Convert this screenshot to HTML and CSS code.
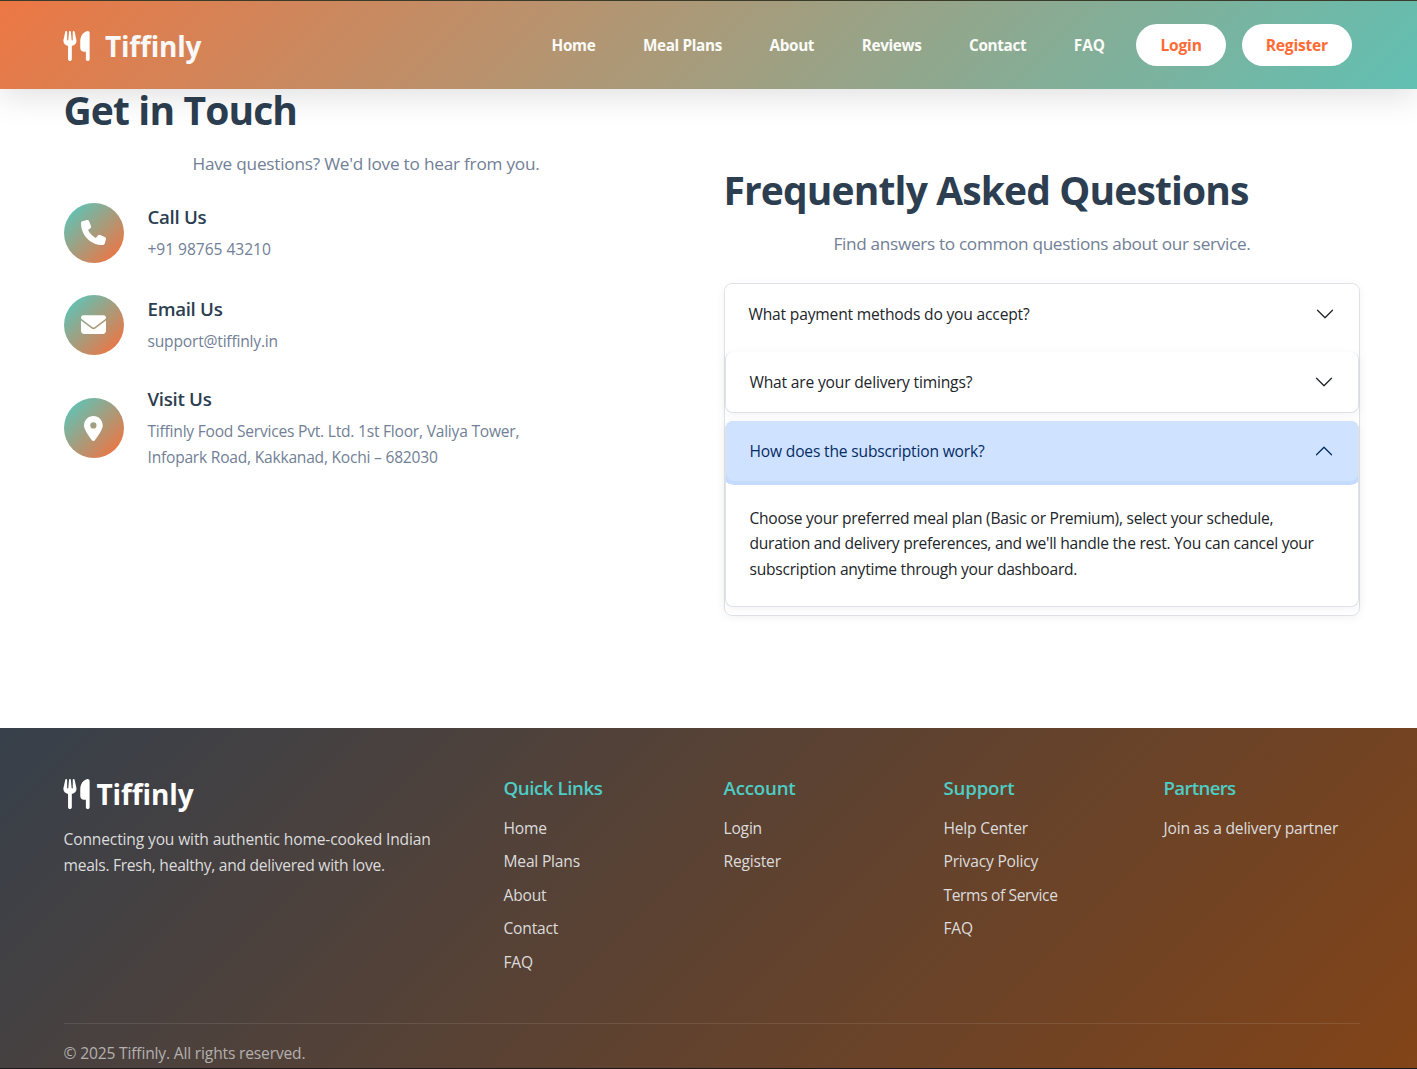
FILE: index.html
```html
<!DOCTYPE html>
<html lang="en">
<head>
<meta charset="utf-8">
<title>Tiffinly</title>
<link rel="stylesheet" href="styles.css">
</head>
<body>
<svg class="sprite" aria-hidden="true">
  <symbol id="utensils" viewBox="0 0 448 512"><path d="M416 0C400 0 288 32 288 176V288c0 35.3 28.7 64 64 64h32V480c0 17.7 14.3 32 32 32s32-14.3 32-32V352 240 32c0-17.7-14.3-32-32-32zM64 16C64 7.8 57.9 1 49.7 .1S34.2 4.6 32.4 12.5L2.1 148.8C.7 155.1 0 161.5 0 167.9c0 45.9 35.1 83.6 80 87.7V480c0 17.7 14.3 32 32 32s32-14.3 32-32V255.6c44.9-4.1 80-41.8 80-87.7c0-6.4-.7-12.8-2.1-19.1L191.6 12.5c-1.8-8-9.3-13.3-17.4-12.4S160 7.8 160 16V150.2c0 5.4-4.4 9.8-9.8 9.8c-5.1 0-9.3-3.9-9.8-9L127.9 14.6C127.2 6.3 120.3 0 112 0s-15.2 6.3-15.9 14.6L83.7 151c-.5 5.1-4.7 9-9.8 9c-5.4 0-9.8-4.4-9.8-9.8V16z"/></symbol>
  <symbol id="chevron" viewBox="0 0 16 16"><path d="M1.646 4.646a.5.5 0 0 1 .708 0L8 10.293l5.646-5.647a.5.5 0 0 1 .708.708l-6 6a.5.5 0 0 1-.708 0l-6-6a.5.5 0 0 1 0-.708z"/></symbol>
</svg>
<header class="header">
  <a class="brand"><svg class="brand-icon"><use href="#utensils"/></svg><span>Tiffinly</span></a>
  <nav class="nav">
    <a class="nav-link">Home</a><a class="nav-link">Meal Plans</a><a class="nav-link">About</a><a class="nav-link">Reviews</a><a class="nav-link">Contact</a><a class="nav-link nav-last">FAQ</a>
    <a class="pill">Login</a><a class="pill">Register</a>
  </nav>
</header>
<main class="main">
  <section class="contact">
    <h2 class="title">Get in Touch</h2>
    <p class="subtitle">Have questions? We'd love to hear from you.</p>
    <div class="contact-list">
      <div class="contact-item">
        <div class="bubble"><svg class="icon" viewBox="0 0 512 512"><path d="M164.9 24.6c-7.7-18.6-28-28.5-47.4-23.2l-88 24C12.1 30.2 0 46 0 64C0 311.4 200.6 512 448 512c18 0 33.8-12.1 38.6-29.5l24-88c5.3-19.4-4.6-39.7-23.2-47.4l-96-40c-16.3-6.8-35.2-2.1-46.3 11.6L304.7 368C234.3 334.7 177.3 277.7 144 207.3L193.3 167c13.7-11.2 18.4-30 11.6-46.3l-40-96z"/></svg></div>
        <div><h5 class="label">Call Us</h5><p class="detail loose">+91 98765 43210</p></div>
      </div>
      <div class="contact-item">
        <div class="bubble"><svg class="icon" viewBox="0 0 512 512"><path d="M48 64C21.5 64 0 85.5 0 112c0 15.1 7.1 29.3 19.2 38.4L236.8 313.6c11.4 8.5 27 8.5 38.4 0L492.8 150.4c12.1-9.1 19.2-23.3 19.2-38.4c0-26.5-21.5-48-48-48H48zM0 176V384c0 35.3 28.7 64 64 64H448c35.3 0 64-28.7 64-64V176L294.4 339.2c-22.8 17.1-54 17.1-76.8 0L0 176z"/></svg></div>
        <div><h5 class="label">Email Us</h5><p class="detail">support@tiffinly.in</p></div>
      </div>
      <div class="contact-item">
        <div class="bubble"><svg class="icon" viewBox="0 0 384 512"><path d="M215.7 499.2C267 435 384 279.4 384 192C384 86 298 0 192 0S0 86 0 192c0 87.4 117 243 168.3 307.2c12.3 15.3 35.1 15.3 47.4 0zM192 128a64 64 0 1 1 0 128 64 64 0 1 1 0-128z"/></svg></div>
        <div><h5 class="label">Visit Us</h5><p class="detail address">Tiffinly Food Services Pvt. Ltd. 1st Floor, Valiya Tower,<br>Infopark Road, Kakkanad, Kochi – 682030</p></div>
      </div>
    </div>
  </section>
  <section class="faq">
    <h2 class="title">Frequently Asked Questions</h2>
    <p class="subtitle subtitle-snug">Find answers to common questions about our service.</p>
    <div class="accordion">
      <div class="item item-first"><button class="question"><span>What payment methods do you accept?</span><svg class="chevron"><use href="#chevron"/></svg></button></div>
      <div class="item"><button class="question"><span>What are your delivery timings?</span><svg class="chevron"><use href="#chevron"/></svg></button></div>
      <div class="item"><button class="question open"><span>How does the subscription work?</span><svg class="chevron"><use href="#chevron"/></svg></button>
        <div class="answer">Choose your preferred meal plan (Basic or Premium), select your schedule,<br>duration and delivery preferences, and we'll handle the rest. You can cancel your<br>subscription anytime through your dashboard.</div>
      </div>
    </div>
  </section>
</main>
<footer class="footer">
  <div class="footer-grid">
    <div>
      <div class="footer-brand"><svg class="brand-icon"><use href="#utensils"/></svg><span>Tiffinly</span></div>
      <p class="about"><span class="wide">Connecting you with authentic home-cooked Indian</span><br><span class="snug">meals. Fresh, healthy, and delivered with love.</span></p>
    </div>
    <div><h5 class="heading heading-snug">Quick Links</h5><ul class="links"><li>Home</li><li>Meal Plans</li><li>About</li><li>Contact</li><li>FAQ</li></ul></div>
    <div><h5 class="heading">Account</h5><ul class="links"><li>Login</li><li>Register</li></ul></div>
    <div><h5 class="heading">Support</h5><ul class="links"><li>Help Center</li><li>Privacy Policy</li><li class="tight">Terms of Service</li><li>FAQ</li></ul></div>
    <div><h5 class="heading heading-tight">Partners</h5><ul class="links"><li>Join as a delivery partner</li></ul></div>
  </div>
  <div class="copyright">© 2025 Tiffinly. All rights reserved.</div>
</footer>
</body>
</html>
```
FILE: styles.css
```css
* { box-sizing: border-box; }
body {
  margin: 0;
  height: 1069px;
  overflow: hidden;
  background: #fff;
  font-family: "Open Sans", "Noto Sans", sans-serif;
  font-size: 15.6px;
  line-height: 25.6px;
  letter-spacing: -.2px;
  color: #212529;
  font-variant-ligatures: none;
}
h2, h5, p, ul { margin: 0; padding: 0; }
.sprite { display: none; }
.loose { letter-spacing: -.05px; }
.wide { letter-spacing: -.15px; }
.snug { letter-spacing: -.27px; }
.tight { letter-spacing: -.37px; }

/* Header */
.header {
  position: relative;
  z-index: 1;
  display: flex;
  justify-content: space-between;
  align-items: center;
  height: 89px;
  padding: 0 65px 0 63px;
  background: linear-gradient(135deg, #ec7744, #61c0b3);
  box-shadow: 0 8px 32px rgba(0, 0, 0, .12);
  border-top: 1px solid #3b3b29;
}
.brand {
  display: flex;
  align-items: center;
  gap: 15px;
  padding-top: 2px;
  font-size: 28px;
  font-weight: 700;
  color: #f8f8f8;
}
.brand span { padding-top: 2px; }
.brand-icon { width: 27px; height: 30px; fill: #fff; }
.nav {
  display: flex;
  align-items: center;
  gap: 47.6px;
  font-weight: 700;
  color: #fbfbf8;
}
.nav-link {
  padding-top: 1px;
  font-size: 15.3px;
  letter-spacing: -.36px;
}
.nav-last { margin-right: -16.1px; letter-spacing: 0; }
.pill {
  height: 42px;
  margin-bottom: 1px;
  padding: 9px 24px 7px;
  border-radius: 21px;
  background: #fff;
  color: #ff6b35;
}
.pill + .pill { margin-left: -31.6px; }

/* Contact and FAQ */
.main {
  display: grid;
  grid-template-columns: 604px 636px;
  column-gap: 56px;
  height: 639px;
  padding: 0 57px 0 64px;
}
.faq { padding-top: 80px; }
.title {
  margin-left: -.5px;
  font-size: 39px;
  line-height: 42px;
  font-weight: 700;
  letter-spacing: -.87px;
  color: #2c3e50;
}
.subtitle {
  margin: 18.6px 0 25.4px;
  font-size: 17.2px;
  line-height: 28px;
  text-align: center;
  letter-spacing: -.22px;
  color: #718096;
}
.subtitle-snug { letter-spacing: -.32px; }
.contact-list { display: grid; gap: 32px; }
.contact-item { display: flex; align-items: center; gap: 23.5px; }
.bubble {
  display: flex;
  align-items: center;
  justify-content: center;
  width: 60px;
  height: 60px;
  padding-right: 1px;
  border-radius: 50%;
  background: linear-gradient(135deg, #4ecdc4, #ff6b35);
}
.icon { height: 25px; fill: #fff; }
.label {
  margin: .3px 0 8.8px;
  font-size: 18.7px;
  line-height: 23px;
  font-weight: 600;
  letter-spacing: -.3px;
  color: #2c3e50;
}
.detail { margin-bottom: -1.1px; color: #718096; }
.address { letter-spacing: -.23px; }

.accordion {
  padding-bottom: 8px;
  border: 1px solid #dee2e6;
  border-radius: 8px;
  box-shadow: 0 2px 10px rgba(0, 0, 0, .05);
}
.item {
  overflow: hidden;
  border: 1px solid #dee2e6;
  border-top: 0;
  border-radius: 8px;
  box-shadow: 0 2px 10px rgba(0, 0, 0, .05);
  background: #fff;
}
.item + .item { margin-top: 8px; }
.item-first { border: 0; box-shadow: none; }
.question {
  display: flex;
  align-items: center;
  justify-content: space-between;
  width: 100%;
  height: 60px;
  padding: 0 24px 0 23.5px;
  border: 0;
  border-radius: 8px;
  background: #fff;
  font: inherit;
  letter-spacing: -.18px;
  color: #212529;
}
.question span { padding-top: 1.2px; }
.chevron { width: 20px; height: 20px; fill: #212529; }
.question.open { background: #cfe2ff; color: #052c65; box-shadow: 0 0 0 4px #c2dbfe; }
.open .chevron { fill: #052c65; transform: rotate(180deg); }
.answer { padding: 24.7px 23.5px 23.3px; letter-spacing: -.26px; }

/* Footer */
.footer {
  height: 341px;
  padding: 48px 57px 0 63.5px;
  border-bottom: 1px solid #1d1a1c;
  background: linear-gradient(135deg, #37404b, #824418);
  color: #dcdcdc;
}
.footer-grid {
  display: grid;
  grid-template-columns: 440px 220px 220px 220px 196px;
  height: 247px;
}
.footer-brand {
  display: flex;
  align-items: center;
  gap: 7px;
  height: 36px;
  margin: 0 0 15px -1px;
  font-size: 28px;
  font-weight: 700;
  letter-spacing: -.1px;
  color: #fff;
}
.footer-brand span { padding-top: 1px; }
.heading {
  margin-bottom: 16.6px;
  font-size: 18.7px;
  line-height: 23px;
  font-weight: 600;
  letter-spacing: -.2px;
  color: #4ecdc4;
}
.heading-snug { letter-spacing: -.43px; }
.heading-tight { letter-spacing: -.7px; }
.links { display: grid; gap: 8px; list-style: none; }
.copyright {
  padding-top: 17.2px;
  border-top: 1px solid rgba(255, 255, 255, .1);
  letter-spacing: -.17px;
  color: #b3b0ae;
}
```
